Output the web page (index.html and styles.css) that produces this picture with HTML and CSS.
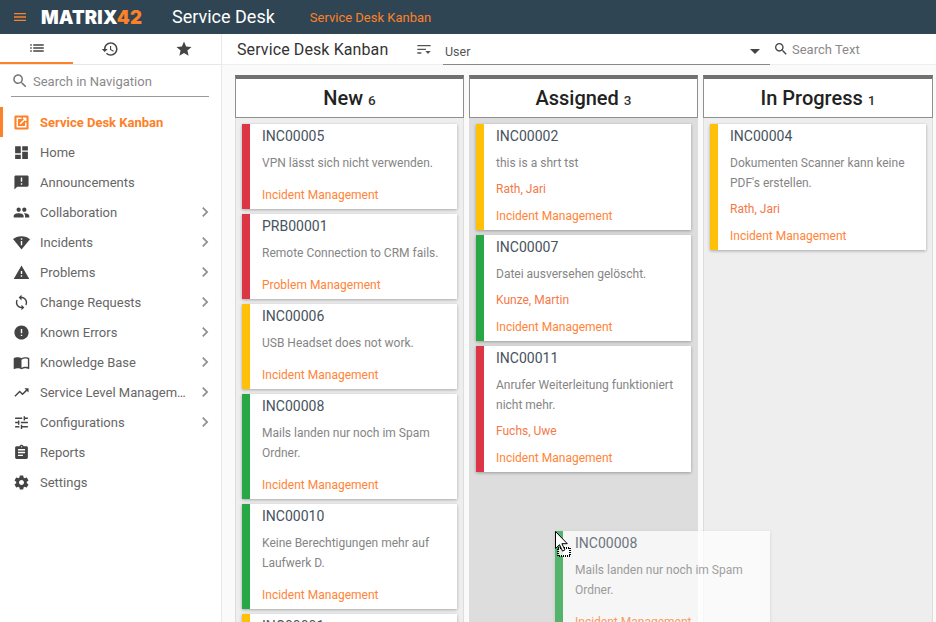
FILE: index.html
```html
<!DOCTYPE html>
<html lang="en">
<head>
<meta charset="utf-8">
<title>Service Desk Kanban</title>
<link rel="stylesheet" href="styles.css">
</head>
<body>
<svg class="sprite" aria-hidden="true">
  <symbol id="i-menu" viewBox="0 0 24 24"><path d="M3 18h18v-2H3v2zm0-5h18v-2H3v2zm0-7v2h18V6H3z"/></symbol>
  <symbol id="i-list" viewBox="0 0 24 24"><path d="M3 13h2v-2H3v2zm0 4h2v-2H3v2zm0-8h2V7H3v2zm4 4h14v-2H7v2zm0 4h14v-2H7v2zM7 7v2h14V7H7z"/></symbol>
  <symbol id="i-history" viewBox="0 0 24 24"><path d="M13 3c-4.97 0-9 4.03-9 9H1l3.89 3.89.07.14L9 12H6c0-3.87 3.13-7 7-7s7 3.13 7 7-3.13 7-7 7c-1.93 0-3.68-.79-4.94-2.06l-1.42 1.42C8.27 19.99 10.51 21 13 21c4.97 0 9-4.03 9-9s-4.03-9-9-9zm-1 5v5l4.28 2.54.72-1.21-3.5-2.08V8H12z"/></symbol>
  <symbol id="i-star" viewBox="0 0 24 24"><path d="M12 17.27L18.18 21l-1.64-7.03L22 9.24l-7.19-.61L12 2 9.19 8.63 2 9.24l5.46 4.73L5.82 21z"/></symbol>
  <symbol id="i-search" viewBox="0 0 24 24"><path d="M15.5 14h-.79l-.28-.27C15.41 12.59 16 11.11 16 9.5 16 5.91 13.09 3 9.5 3S3 5.91 3 9.5 5.91 16 9.5 16c1.61 0 3.09-.59 4.23-1.57l.27.28v.79l5 4.99L20.49 19l-4.99-5zm-6 0C7.01 14 5 11.99 5 9.5S7.01 5 9.5 5 14 7.01 14 9.5 11.99 14 9.5 14z"/></symbol>
  <symbol id="i-launch" viewBox="0 0 24 24"><path fill-rule="evenodd" d="M4 2h16a2 2 0 0 1 2 2v16a2 2 0 0 1-2 2H4a2 2 0 0 1-2-2V4a2 2 0 0 1 2-2zm1 3v14h14v-7h-2v5H7V7h5V5H5zm9 0v2h1.6l-6.3 6.3 1.4 1.4L17 8.4V10h2V5h-5z"/></symbol>
  <symbol id="i-dashboard" viewBox="0 0 24 24"><path d="M3 13h8V3H3v10zm0 8h8v-6H3v6zm10 0h8V11h-8v10zm0-18v6h8V3h-8z"/></symbol>
  <symbol id="i-announce" viewBox="0 0 24 24"><path d="M20 2H4c-1.1 0-1.99.9-1.99 2L2 22l4-4h14c1.1 0 2-.9 2-2V4c0-1.1-.9-2-2-2zm-7 9h-2V5h2v6zm0 4h-2v-2h2v2z"/></symbol>
  <symbol id="i-people" viewBox="0 0 24 24"><path d="M16 11c1.66 0 2.99-1.34 2.99-3S17.66 5 16 5c-1.66 0-3 1.34-3 3s1.34 3 3 3zm-8 0c1.66 0 2.99-1.34 2.99-3S9.66 5 8 5C6.34 5 5 6.34 5 8s1.34 3 3 3zm0 2c-2.33 0-7 1.17-7 3.5V19h14v-2.5c0-2.33-4.67-3.5-7-3.5zm8 0c-.29 0-.62.02-.97.05 1.16.84 1.97 1.97 1.97 3.45V19h6v-2.5c0-2.33-4.67-3.5-7-3.5z"/></symbol>
  <symbol id="i-wifi" viewBox="0 0 24 24"><path d="M12 3C6.95 3 3.15 4.85 0 7.23L12 22 24 7.25C20.85 4.87 17.05 3 12 3zm1 13h-2v-6h2v6zm-2-8V6h2v2h-2z"/></symbol>
  <symbol id="i-warning" viewBox="0 0 24 24"><path d="M1 21h22L12 2 1 21zm12-3h-2v-2h2v2zm0-4h-2v-4h2v4z"/></symbol>
  <symbol id="i-sync" viewBox="0 0 24 24"><path d="M12 4V1L8 5l4 4V6c3.31 0 6 2.69 6 6 0 1.01-.25 1.97-.7 2.8l1.46 1.46C19.54 15.03 20 13.57 20 12c0-4.42-3.58-8-8-8zm0 14c-3.31 0-6-2.69-6-6 0-1.01.25-1.97.7-2.8L5.24 7.74C4.46 8.97 4 10.43 4 12c0 4.42 3.58 8 8 8v3l4-4-4-4v3z"/></symbol>
  <symbol id="i-error" viewBox="0 0 24 24"><path d="M12 2C6.48 2 2 6.48 2 12s4.48 10 10 10 10-4.48 10-10S17.52 2 12 2zm1 15h-2v-2h2v2zm0-4h-2V7h2v6z"/></symbol>
  <symbol id="i-book" viewBox="0 0 24 24"><path d="M21 5c-1.11-.35-2.33-.5-3.5-.5-1.95 0-4.05.4-5.5 1.5-1.45-1.1-3.55-1.5-5.5-1.5S2.45 4.9 1 6v14.65c0 .25.25.5.5.5.1 0 .15-.05.25-.05C3.1 20.45 5.05 20 6.5 20c1.95 0 4.05.4 5.5 1.5 1.35-.85 3.8-1.5 5.5-1.5 1.65 0 3.35.3 4.75 1.05.1.05.15.05.25.05.25 0 .5-.25.5-.5V6c-.6-.45-1.25-.75-2-1zm0 13.5c-1.1-.35-2.3-.5-3.5-.5-1.7 0-4.15.65-5.5 1.5V8c1.35-.85 3.8-1.5 5.5-1.5 1.2 0 2.4.15 3.5.5v11.5z"/></symbol>
  <symbol id="i-trend" viewBox="0 0 24 24"><path d="M16 6l2.29 2.29-4.88 4.88-4-4L2 16.59 3.41 18l6-6 4 4 6.3-6.29L22 12V6z"/></symbol>
  <symbol id="i-tune" viewBox="0 0 24 24"><path d="M3 17v2h6v-2H3zM3 5v2h10V5H3zm10 16v-2h8v-2h-8v-2h-2v6h2zM7 9v2H3v2h4v2h2V9H7zm14 4v-2H11v2h10zm-6-4h2V7h4V5h-4V3h-2v6z"/></symbol>
  <symbol id="i-report" viewBox="0 0 24 24"><path d="M19 3h-4.18C14.4 1.84 13.3 1 12 1c-1.3 0-2.4.84-2.82 2H5c-1.1 0-2 .9-2 2v14c0 1.1.9 2 2 2h14c1.1 0 2-.9 2-2V5c0-1.1-.9-2-2-2zm-7 0c.55 0 1 .45 1 1s-.45 1-1 1-1-.45-1-1 .45-1 1-1zm2 14H7v-2h7v2zm3-4H7v-2h10v2zm0-4H7V7h10v2z"/></symbol>
  <symbol id="i-settings" viewBox="0 0 24 24"><path d="M19.43 12.98c.04-.32.07-.64.07-.98s-.03-.66-.07-.98l2.11-1.65c.19-.15.24-.42.12-.64l-2-3.46c-.12-.22-.39-.3-.61-.22l-2.49 1c-.52-.4-1.08-.73-1.69-.98l-.38-2.65C14.46 2.18 14.25 2 14 2h-4c-.25 0-.46.18-.49.42l-.38 2.65c-.61.25-1.17.59-1.69.98l-2.49-1c-.23-.09-.49 0-.61.22l-2 3.46c-.13.22-.07.49.12.64l2.11 1.65c-.04.32-.07.65-.07.98s.03.66.07.98l-2.11 1.65c-.19.15-.24.42-.12.64l2 3.46c.12.22.39.3.61.22l2.49-1c.52.4 1.08.73 1.69.98l.38 2.65c.03.24.24.42.49.42h4c.25 0 .46-.18.49-.42l.38-2.65c.61-.25 1.17-.59 1.69-.98l2.49 1c.23.09.49 0 .61-.22l2-3.46c.12-.22.07-.49-.12-.64l-2.11-1.65zM12 15.5c-1.93 0-3.5-1.57-3.5-3.5s1.57-3.5 3.5-3.5 3.5 1.57 3.5 3.5-1.57 3.5-3.5 3.5z"/></symbol>
  <symbol id="i-chevron" viewBox="0 0 24 24"><path d="M10 6L8.59 7.41 13.17 12l-4.58 4.59L10 18l6-6z"/></symbol>
  <symbol id="i-sort" viewBox="0 0 24 24"><path d="M2 6h20v2H2zM2 11.5h13v2H2zM2 17h6v2H2zM14 15h8l-4 4.5z"/></symbol>
</svg>

<header class="topbar">
  <svg class="menu-btn"><use href="#i-menu"/></svg>
  <div class="logo">MATRIX<span class="logo-num">42</span></div>
  <div class="app-name">Service Desk</div>
  <div class="crumb">Service Desk Kanban</div>
</header>

<div class="main">
  <aside class="sidebar">
    <div class="tabs">
      <div class="tab tab-active"><svg class="tab-icon"><use href="#i-list"/></svg></div>
      <div class="tab"><svg class="tab-icon"><use href="#i-history"/></svg></div>
      <div class="tab"><svg class="tab-icon"><use href="#i-star"/></svg></div>
    </div>
    <div class="nav-search">
      <svg class="nav-search-icon"><use href="#i-search"/></svg>
      <span>Search in Navigation</span>
    </div>
    <nav class="nav">
      <a class="nav-item nav-active"><svg class="nav-icon"><use href="#i-launch"/></svg><span class="nav-label">Service Desk Kanban</span></a>
      <a class="nav-item"><svg class="nav-icon"><use href="#i-dashboard"/></svg><span class="nav-label">Home</span></a>
      <a class="nav-item"><svg class="nav-icon"><use href="#i-announce"/></svg><span class="nav-label">Announcements</span></a>
      <a class="nav-item"><svg class="nav-icon"><use href="#i-people"/></svg><span class="nav-label">Collaboration</span><svg class="nav-chevron"><use href="#i-chevron"/></svg></a>
      <a class="nav-item"><svg class="nav-icon"><use href="#i-wifi"/></svg><span class="nav-label">Incidents</span><svg class="nav-chevron"><use href="#i-chevron"/></svg></a>
      <a class="nav-item"><svg class="nav-icon"><use href="#i-warning"/></svg><span class="nav-label">Problems</span><svg class="nav-chevron"><use href="#i-chevron"/></svg></a>
      <a class="nav-item"><svg class="nav-icon"><use href="#i-sync"/></svg><span class="nav-label">Change Requests</span><svg class="nav-chevron"><use href="#i-chevron"/></svg></a>
      <a class="nav-item"><svg class="nav-icon"><use href="#i-error"/></svg><span class="nav-label">Known Errors</span><svg class="nav-chevron"><use href="#i-chevron"/></svg></a>
      <a class="nav-item"><svg class="nav-icon"><use href="#i-book"/></svg><span class="nav-label">Knowledge Base</span><svg class="nav-chevron"><use href="#i-chevron"/></svg></a>
      <a class="nav-item"><svg class="nav-icon"><use href="#i-trend"/></svg><span class="nav-label">Service Level Management</span><svg class="nav-chevron"><use href="#i-chevron"/></svg></a>
      <a class="nav-item"><svg class="nav-icon"><use href="#i-tune"/></svg><span class="nav-label">Configurations</span><svg class="nav-chevron"><use href="#i-chevron"/></svg></a>
      <a class="nav-item"><svg class="nav-icon"><use href="#i-report"/></svg><span class="nav-label">Reports</span></a>
      <a class="nav-item"><svg class="nav-icon"><use href="#i-settings"/></svg><span class="nav-label">Settings</span></a>
    </nav>
  </aside>

  <main class="content">
    <div class="toolbar">
      <div class="page-title">Service Desk Kanban</div>
      <svg class="sort-icon"><use href="#i-sort"/></svg>
      <div class="select"><span>User</span><span class="select-arrow"></span></div>
      <div class="text-search">
        <svg class="text-search-icon"><use href="#i-search"/></svg>
        <span>Search Text</span>
      </div>
    </div>

    <div class="board">
      <section class="column">
        <h2 class="col-head">New <small>6</small></h2>
        <div class="cards">
          <article class="card card-red"><div class="card-id">INC00005</div><div class="card-text">VPN lässt sich nicht verwenden.</div><div class="card-link">Incident Management</div></article>
          <article class="card card-red"><div class="card-id">PRB00001</div><div class="card-text">Remote Connection to CRM fails.</div><div class="card-link">Problem Management</div></article>
          <article class="card card-yellow"><div class="card-id">INC00006</div><div class="card-text">USB Headset does not work.</div><div class="card-link">Incident Management</div></article>
          <article class="card card-green"><div class="card-id">INC00008</div><div class="card-text">Mails landen nur noch im Spam Ordner.</div><div class="card-link">Incident Management</div></article>
          <article class="card card-green"><div class="card-id">INC00010</div><div class="card-text">Keine Berechtigungen mehr auf Laufwerk D.</div><div class="card-link">Incident Management</div></article>
          <article class="card card-yellow"><div class="card-id">INC00001</div><div class="card-text">Drucker druckt nicht.</div><div class="card-link">Incident Management</div></article>
        </div>
      </section>
      <section class="column column-target">
        <h2 class="col-head">Assigned <small>3</small></h2>
        <div class="cards">
          <article class="card card-yellow"><div class="card-id">INC00002</div><div class="card-text">this is a shrt tst</div><div class="card-person">Rath, Jari</div><div class="card-link card-link-tight">Incident Management</div></article>
          <article class="card card-green"><div class="card-id">INC00007</div><div class="card-text">Datei ausversehen gelöscht.</div><div class="card-person">Kunze, Martin</div><div class="card-link card-link-tight">Incident Management</div></article>
          <article class="card card-red"><div class="card-id">INC00011</div><div class="card-text">Anrufer Weiterleitung funktioniert nicht mehr.</div><div class="card-person">Fuchs, Uwe</div><div class="card-link card-link-tight">Incident Management</div></article>
        </div>
      </section>
      <section class="column column-wide">
        <h2 class="col-head">In Progress <small>1</small></h2>
        <div class="cards">
          <article class="card card-yellow"><div class="card-id">INC00004</div><div class="card-text">Dokumenten Scanner kann keine PDF's erstellen.</div><div class="card-person">Rath, Jari</div><div class="card-link card-link-tight">Incident Management</div></article>
        </div>
      </section>
    </div>
  </main>
</div>

<article class="card card-green drag-card"><div class="card-id">INC00008</div><div class="card-text">Mails landen nur noch im Spam Ordner.</div><div class="card-link">Incident Management</div></article>

<svg class="drag-cursor" viewBox="0 0 17 27" width="17" height="27">
  <rect x="3" y="17" width="12" height="8" fill="#fff" fill-opacity=".8" stroke="#000" stroke-width="2" stroke-dasharray="1 1"/>
  <path d="M.5.5v17l4-3.8 3 6.4 2.4-1.2-3-6.2h5.4z" fill="#fff" stroke="#000" stroke-width="1"/>
</svg>
</body>
</html>
```
FILE: styles.css
```css
* { box-sizing: border-box; }
html, body { margin: 0; height: 100%; overflow: hidden; }
body {
  width: 936px;
  height: 622px;
  position: relative;
  font-family: Roboto, "Liberation Sans", sans-serif;
  color: #333;
  background: #fafafa;
  display: flex;
  flex-direction: column;
}
.sprite { display: none; }
svg { fill: currentColor; display: block; flex: none; }

.topbar {
  flex: none;
  height: 34px;
  padding-bottom: 1px;
  background: #2f4553;
  display: flex;
  align-items: center;
  color: #fff;
}
.menu-btn { width: 16px; height: 16px; margin-left: 12px; color: #fd8128; }
.logo {
  margin-left: 13px;
  width: 131px;
  font-family: Inter, Roboto, sans-serif;
  font-size: 18.5px;
  font-weight: 900;
  letter-spacing: .15px;
}
.logo-num { color: #fd8128; }
.app-name { font-size: 18px; }
.crumb { font-size: 13px; color: #fd8128; margin: 2px 0 0 35px; }

.main { flex: 1; display: flex; min-height: 0; }

.sidebar {
  flex: none;
  width: 222px;
  background: #fff;
  border-right: 1px solid #e8e8e8;
}
.tabs {
  display: flex;
  height: 31px;
  border-bottom: 1px solid #e6e6e6;
}
.tab {
  width: 73.5px;
  height: 30px;
  display: flex;
  align-items: center;
  justify-content: center;
  color: #444;
}
.tab-active { width: 73px; margin-right: .5px; border-bottom: 2px solid #fd8128; }
.tab-icon { width: 18px; height: 18px; }
.nav-search {
  margin: 6px 12px 0 11px;
  height: 26px;
  border-bottom: 1px solid #9a9a9a;
  display: flex;
  align-items: center;
  gap: 4px;
  font-size: 13px;
  color: #8a8a8a;
  padding-bottom: 5px;
}
.nav-search-icon { width: 18px; height: 18px; color: #777; }

.nav { margin-top: 10px; }
.nav-item {
  height: 30px;
  display: flex;
  align-items: center;
  padding-left: 12.5px;
  font-size: 13px;
  color: #666;
}
.nav-active {
  border-left: 3px solid #fd8128;
  padding-left: 9.5px;
  color: #fd8128;
  font-weight: 700;
}
.nav-icon { width: 17px; height: 17px; color: #444; }
.nav-active .nav-icon { color: #fd8128; }
.nav-label {
  margin-left: 10.5px;
  width: 148px;
  white-space: nowrap;
  overflow: hidden;
  text-overflow: ellipsis;
}
.nav-chevron { width: 20px; height: 20px; margin-left: 7px; color: #8e8e8e; }

.content { flex: 1; min-width: 0; display: flex; flex-direction: column; }
.toolbar {
  flex: none;
  height: 31px;
  background: #fff;
  border-bottom: 1px solid #eee;
  display: flex;
  align-items: center;
  padding-left: 15px;
}
.page-title { font-size: 16px; letter-spacing: .1px; color: #333; width: 179px; }
.sort-icon { width: 16px; height: 16px; color: #555; }
.select {
  margin-left: 11px;
  width: 327px;
  height: 31px;
  border-bottom: 1px solid #888;
  display: flex;
  align-items: center;
  justify-content: space-between;
  padding: 6px 10px 0 2px;
  font-size: 12.5px;
  color: #555;
}
.select-arrow {
  width: 0;
  height: 0;
  border: 5px solid transparent;
  border-top: 5px solid #444;
  border-bottom: 0;
}
.text-search {
  flex: 1;
  display: flex;
  align-items: center;
  gap: 3px;
  padding: 0 0 0 3px;
  font-size: 13px;
  color: #8a8a8a;
}
.text-search-icon { width: 16px; height: 16px; color: #444; }

.board {
  flex: 1;
  min-height: 0;
  display: flex;
  gap: 5px;
  padding: 10px 0 0 13px;
  overflow: hidden;
}
.column {
  flex: none;
  width: 229px;
  background: #eee;
  display: flex;
  flex-direction: column;
}
.column-wide { width: 230px; }
.column-target { background: #ddd; }
.col-head {
  flex: none;
  margin: 0;
  height: 43px;
  background: #fff;
  border: 1px solid #8f8f8f;
  border-top: 4px solid #707070;
  display: flex;
  align-items: baseline;
  justify-content: center;
  gap: 5px;
  padding-top: 7px;
  font-size: 20px;
  font-weight: 500;
  color: #222;
}
.col-head small { font-size: 13.5px; font-weight: 500; color: #333; }
.cards {
  flex: 1;
  padding: 6px 7px 0;
  display: flex;
  flex-direction: column;
  gap: 5px;
  box-shadow: inset 1px 0 #ddd, inset -1px 0 #ddd;
}
.card {
  flex: none;
  width: 215px;
  background: #fff;
  border-left: 8px solid #888;
  box-shadow: 0 1px 3px rgba(0, 0, 0, .3);
  padding: 0 16px 4px 12px;
}
.column-wide .card { width: 216px; }
.card-red { border-left-color: #dc3545; }
.card-yellow { border-left-color: #ffc107; }
.card-green { border-left-color: #28a745; }
.card-id { font-size: 14px; line-height: 24px; color: #47535e; }
.card-text { font-size: 12px; line-height: 20px; margin-top: 5px; color: #858585; }
.card-person { font-size: 12px; line-height: 20px; margin-top: 6px; color: #f4794a; }
.card-link { font-size: 12px; line-height: 20px; margin-top: 12px; color: #ff8438; }
.card-link-tight { margin-top: 7px; }

.drag-card {
  position: absolute;
  left: 555px;
  top: 531px;
  opacity: .75;
  box-shadow: 0 1px 3px rgba(0, 0, 0, .15);
}
.drag-cursor { position: absolute; left: 555px; top: 531px; }
```
